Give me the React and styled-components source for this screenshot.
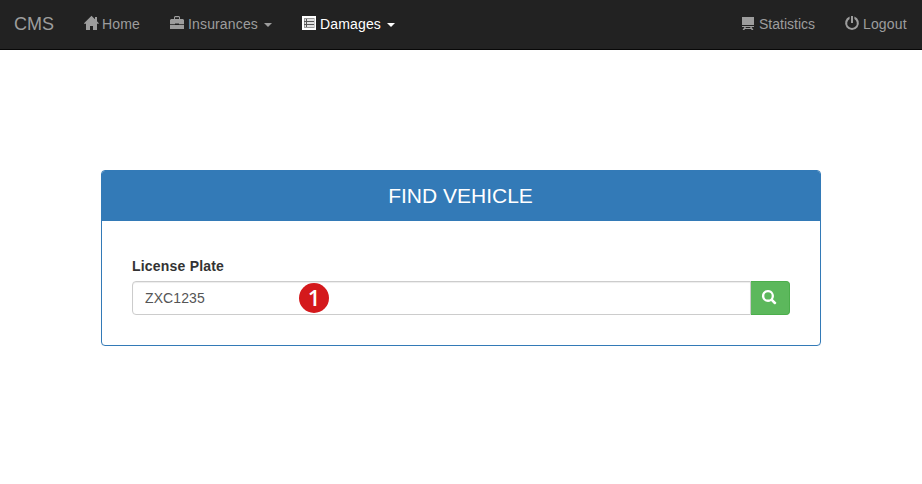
import React from 'react';
import styled, { createGlobalStyle } from 'styled-components';

const GlobalStyle = createGlobalStyle`
  *, *::before, *::after { box-sizing: border-box; }
  body {
    margin: 0;
    background: #fff;
    color: #333;
    font: 14px/20px "Liberation Sans", Arial, sans-serif;
  }
`;

const Navbar = styled.nav`
  display: flex;
  height: 50px;
  background: #222;
  border-bottom: 1px solid #080808;
`;

const Brand = styled.a`
  padding: 14px 15px 15px 14px;
  width: 69px;
  font-size: 18px;
  color: #9d9d9d;
`;

const NavList = styled.ul`
  display: flex;
  list-style: none;
  margin: 0;
  padding: 0;
  margin-left: ${(p) => (p.$right ? 'auto' : 0)};
`;

const NavLink = styled.a`
  display: flex;
  align-items: flex-start;
  padding: 14px 15px 15px;
  white-space: nowrap;
  color: ${(p) => (p.$active ? '#fff' : '#9d9d9d')};
`;

const NavText = styled.span`
  width: ${(p) => p.$width}px;
  margin-left: 4px;
  letter-spacing: ${(p) => p.$spacing || 0}px;
`;

const Glyph = styled.svg`
  display: block;
  flex: none;
  width: 14px;
  height: 14px;
  margin-top: 2px;
  overflow: visible;
  fill: currentColor;
`;

const Caret = styled.span`
  margin: 9px 0 0 6px;
  border-top: 4px solid currentColor;
  border-left: 4px solid transparent;
  border-right: 4px solid transparent;
`;

const Panel = styled.section`
  width: 720px;
  height: 176px;
  margin: 120px 0 0 101px;
  border: 1px solid #337ab7;
  border-radius: 4px;
  box-shadow: 0 1px 1px rgba(0, 0, 0, 0.05);
`;

const PanelTitle = styled.h3`
  margin: 0;
  height: 50px;
  padding-right: 1px;
  border-radius: 3px 3px 0 0;
  background: #337ab7;
  color: #fff;
  font-size: 21px;
  font-weight: 400;
  line-height: 50px;
  text-align: center;
`;

const Form = styled.form`
  padding: 35px 30px 30px;
`;

const Label = styled.label`
  display: block;
  margin-bottom: 5px;
  font-weight: 700;
  letter-spacing: 0.2px;
`;

const InputGroup = styled.div`
  display: flex;
  position: relative;
`;

const Input = styled.input`
  flex: 1;
  min-width: 0;
  height: 34px;
  padding: 6px 12px;
  border: 1px solid #ccc;
  border-radius: 4px 0 0 4px;
  outline: 0;
  background: #fff;
  box-shadow: inset 0 1px 1px rgba(0, 0, 0, 0.075);
  color: #555;
  font: inherit;
  letter-spacing: 0.1px;
`;

const SearchButton = styled.button`
  display: flex;
  justify-content: center;
  width: 39px;
  height: 34px;
  padding: 6px 2px 6px 0;
  border: 1px solid #4cae4c;
  border-left: 0;
  border-radius: 0 4px 4px 0;
  background: #5cb85c;
  color: #fff;
`;

const StepBadge = styled.span`
  position: absolute;
  left: 167px;
  top: 2px;
  width: 30px;
  height: 30px;
  border-radius: 50%;
  background: #d4191c;
  color: #fff;
  font: 600 22px/29px "Open Sans", "Noto Sans", sans-serif;
  text-align: center;
`;

const HomeIcon = () => (
  <Glyph viewBox="0 0 14 14">
    <path d="M7.5-.3 0 7.2v.6h2V14h4v-4h3v4h4V7.8h1.8v-.6L13 5.2V1h-2v2.2z" />
  </Glyph>
);

const BriefcaseIcon = () => (
  <Glyph viewBox="0 0 14 14">
    <path fillRule="evenodd" d="M5 0h4l1 1v2h3l1 1v4.2H9V7.5H5v.7H0V4l1-1h3V1zM5 1.2V3h4V1.2zM0 9h14v4H0z" />
  </Glyph>
);

const ListIcon = () => (
  <Glyph viewBox="0 0 14 14">
    <path d="M0 0h14v14H0z" />
    <path fill="#999" d="M2 2h10.5v10H2z" />
    <path fill="#e0e0e0" d="M5 3h7v2H5zM5 6h7v2H5zM5 9h7v2H5zM3 3h1v2H3zM3 6h1v2H3zM3 9h1v2H3z" />
    <path fill="#555" d="M2 5h10v1H2zM2 8h10v1H2zM4 3h1v8H4z" />
  </Glyph>
);

const BoardIcon = () => (
  <Glyph viewBox="0 0 14 14">
    <path d="M1 1h12v8H1z" />
    <path d="M1 10h12v1h-2.5l2 3h-1.7l-.9-1H4.1l-.9 1H1.5l2-3H1zM5 11l-.7 1h5.4L9 11z" />
  </Glyph>
);

const PowerIcon = () => (
  <Glyph viewBox="0 0 14 14">
    <path d="M6 0h2v7H6zM4.6.6v2.5a4.8 4.8 0 1 0 4.8 0V.6A6.9 6.9 0 1 1 4.6.6z" />
  </Glyph>
);

const SearchIcon = () => (
  <Glyph viewBox="0 0 14 14">
    <path fillRule="evenodd" d="M6 0a6 6 0 1 0 3.1 11.1l2.9 2.9c.5.5 1.2.4 1.6 0l.4-.4c.4-.4.4-1 0-1.4l-3-3A6 6 0 0 0 6 0zm0 2.2a3.7 3.7 0 1 1 0 7.4 3.7 3.7 0 0 1 0-7.4z" />
  </Glyph>
);

export default function App() {
  return (
    <>
      <GlobalStyle />
      <Navbar>
        <Brand>CMS</Brand>
        <NavList>
          <li><NavLink><HomeIcon /><NavText $width={38} $spacing={0.15}>Home</NavText></NavLink></li>
          <li><NavLink><BriefcaseIcon /><NavText $width={70} $spacing={0.15}>Insurances</NavText><Caret /></NavLink></li>
          <li><NavLink $active><ListIcon /><NavText $width={61} $spacing={0.15}>Damages</NavText><Caret /></NavLink></li>
        </NavList>
        <NavList $right>
          <li><NavLink><BoardIcon /><NavText $width={56}>Statistics</NavText></NavLink></li>
          <li><NavLink><PowerIcon /><NavText $width={44} $spacing={0.15}>Logout</NavText></NavLink></li>
        </NavList>
      </Navbar>
      <Panel>
        <PanelTitle>FIND VEHICLE</PanelTitle>
        <Form>
          <Label htmlFor="plate">License Plate</Label>
          <InputGroup>
            <Input id="plate" defaultValue="ZXC1235" />
            <SearchButton type="button" aria-label="Search"><SearchIcon /></SearchButton>
            <StepBadge>1</StepBadge>
          </InputGroup>
        </Form>
      </Panel>
    </>
  );
}
